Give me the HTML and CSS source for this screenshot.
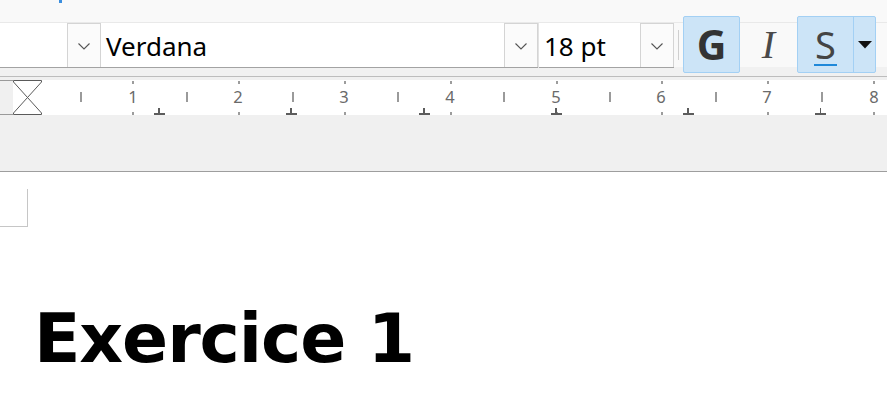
FILE: index.html
```html
<!DOCTYPE html>
<html lang="fr">
<head>
<meta charset="utf-8">
<title>Éditeur</title>
<link rel="stylesheet" href="styles.css">
</head>
<body>
<div class="topstrip"><span class="marker"></span></div>
<div class="toolbar">
  <div class="combo">
    <div class="field f1"></div>
    <div class="drop"><svg width="12" height="7" viewBox="0 0 12 7"><path d="M0.5 0.5 L6 6 L11.5 0.5" fill="none" stroke="#555" stroke-width="1.1"/></svg></div>
    <div class="field f2">Verdana</div>
    <div class="drop"><svg width="12" height="7" viewBox="0 0 12 7"><path d="M0.5 0.5 L6 6 L11.5 0.5" fill="none" stroke="#555" stroke-width="1.1"/></svg></div>
  </div>
  <div class="combo combo2">
    <div class="field f3">18 pt</div>
    <div class="drop"><svg width="12" height="7" viewBox="0 0 12 7"><path d="M0.5 0.5 L6 6 L11.5 0.5" fill="none" stroke="#555" stroke-width="1.1"/></svg></div>
  </div>
  <div class="sep"></div>
  <div class="btn active bold">G</div>
  <div class="btn italic">I</div>
  <div class="split">
    <div class="split-main"><span class="under">S</span></div>
    <div class="split-arrow"><svg width="14" height="8" viewBox="0 0 14 8"><path d="M0 0 H14 L7 7.5 Z" fill="#111"/></svg></div>
  </div>
</div>
<div class="rulerzone">
  <div class="ruler">
    <svg class="hourglass" width="42" height="35" viewBox="0 0 42 35">
      <path d="M0 0.5 H13 M0 34.5 H13" stroke="#9a9a9a" stroke-width="1"/>
      <path d="M13.5 0.5 H41.5 V2 L13.5 33 V34.5 H41.5 V33 L13.5 2 Z" fill="#fff" stroke="#5a5a5a" stroke-width="1"/>
    </svg>
    <span class="num" style="left:120px">1</span>
    <span class="num" style="left:225px">2</span>
    <span class="num" style="left:331px">3</span>
    <span class="num" style="left:437px">4</span>
    <span class="num" style="left:543px">5</span>
    <span class="num" style="left:648px">6</span>
    <span class="num" style="left:754px">7</span>
    <span class="num" style="left:861px">8</span>
    <span class="tick" style="left:119px"></span><span class="tick bot" style="left:119px"></span>
    <span class="tick" style="left:225px"></span><span class="tick bot" style="left:225px"></span>
    <span class="tick" style="left:331px"></span><span class="tick bot" style="left:331px"></span>
    <span class="tick" style="left:437px"></span><span class="tick bot" style="left:437px"></span>
    <span class="tick" style="left:543px"></span><span class="tick bot" style="left:543px"></span>
    <span class="tick" style="left:648px"></span><span class="tick bot" style="left:648px"></span>
    <span class="tick" style="left:754px"></span><span class="tick bot" style="left:754px"></span>
    <span class="tick" style="left:860px"></span><span class="tick bot" style="left:860px"></span>
    <span class="half" style="left:67px"></span>
    <span class="half" style="left:173px"></span>
    <span class="half" style="left:279px"></span>
    <span class="half" style="left:384px"></span>
    <span class="half" style="left:490px"></span>
    <span class="half" style="left:596px"></span>
    <span class="half" style="left:702px"></span>
    <span class="half" style="left:808px"></span>
    <span class="tab" style="left:141px"></span>
    <span class="tab" style="left:273px"></span>
    <span class="tab" style="left:406px"></span>
    <span class="tab" style="left:538px"></span>
    <span class="tab" style="left:670px"></span>
    <span class="tab" style="left:802px"></span>
  </div>
</div>
<div class="doc">
  <div class="corner"></div>
  <h1 class="title">Exercice 1</h1>
</div>
</body>
</html>
```

FILE: styles.css
```css
html, body {
  margin: 0;
  padding: 0;
}
body {
  width: 887px;
  height: 403px;
  overflow: hidden;
  background: #fff;
  font-family: "Noto Sans", "Open Sans", sans-serif;
}
.topstrip {
  height: 16px;
  background: #f9f9f9;
  display: flex;
}
.marker {
  display: block;
  margin-left: 59px;
  width: 3px;
  height: 3px;
  background: #3b8ede;
}
.toolbar {
  box-sizing: border-box;
  height: 61px;
  display: flex;
  align-items: flex-start;
  background: linear-gradient(#f9f9f9 0 6px, #e9e9e9 6px 7px, #f9f9f9 7px 51px, #f1f1f1 51px);
  border-bottom: 1px solid #bdbdbd;
}
.combo {
  display: flex;
  margin-top: 7px;
  height: 45px;
  box-sizing: border-box;
  border-bottom: 1px solid #a3a3a3;
  background: #fff;
}
.combo2 {
  margin-left: 1px;
  box-shadow: -1px 0 0 #e2e2e2;
}
.field {
  box-sizing: border-box;
  height: 44px;
  background: #fff;
  color: #000;
  font-size: 26px;
  line-height: 46px;
  padding-left: 5px;
  white-space: nowrap;
}
.f1 { width: 67px; }
.f2 { width: 403px; }
.f3 { width: 101px; }
.drop {
  box-sizing: border-box;
  width: 34px;
  height: 44px;
  border: 1px solid #d4d4d4;
  border-bottom: none;
  background: #fbfbfb;
  display: flex;
  align-items: center;
  justify-content: center;
}
.drop svg { margin-top: 1px; }
.sep {
  width: 1px;
  height: 30px;
  margin: 14px 4px 0 4px;
  background: #cfcfcf;
}
.btn {
  box-sizing: border-box;
  width: 57px;
  height: 57px;
  display: flex;
  align-items: center;
  justify-content: center;
  border: 1px solid transparent;
  border-radius: 2px;
  font-size: 40px;
  line-height: 1;
}
.active {
  background: #cce4f7;
  border-color: #a3d0f4;
}
.bold {
  font-family: "Noto Sans", sans-serif;
  font-weight: 700;
  font-size: 41px;
  color: #333;
}
.italic {
  font-family: "Liberation Serif", serif;
  font-style: italic;
  color: #4a4a4a;
  font-size: 40px;
}
.split {
  box-sizing: border-box;
  display: flex;
  height: 57px;
  background: #cce4f7;
  border: 1px solid #a3d0f4;
  border-radius: 2px;
}
.split-main {
  width: 55px;
  display: flex;
  align-items: center;
  justify-content: center;
  border-right: 1px solid #a3d0f4;
}
.under {
  font-size: 38px;
  color: #444;
  line-height: 1;
  border-bottom: 2px solid #1f88d9;
  padding: 0 1px 1px;
  margin-top: 2px;
}
.split-arrow {
  width: 21px;
  display: flex;
  align-items: center;
  justify-content: center;
}
.rulerzone {
  box-sizing: border-box;
  height: 95px;
  background: #f0f0f0;
  border-bottom: 1px solid #9e9e9e;
  padding-top: 3px;
}
.ruler {
  position: relative;
  margin-left: 13px;
  height: 35px;
  background: #fff;
}
.hourglass {
  position: absolute;
  left: -13px;
  top: 0;
}
.num {
  position: absolute;
  top: 6px;
  transform: translateX(-50%);
  font-size: 16.5px;
  line-height: 21px;
  color: #6a6a6a;
}
.tick {
  position: absolute;
  top: 1px;
  width: 2px;
  height: 3px;
  background: #9c9c9c;
}
.tick.bot {
  top: 32px;
}
.half {
  position: absolute;
  top: 12px;
  width: 2px;
  height: 10px;
  background: #9a9a9a;
}
.tab {
  position: absolute;
  top: 28px;
  width: 11px;
  height: 7px;
  background: linear-gradient(90deg, transparent 4.5px, #5c5c5c 4.5px 6.5px, transparent 6.5px) top / 11px 5px no-repeat,
              linear-gradient(#5c5c5c, #5c5c5c) bottom / 11px 2px no-repeat;
}
.doc {
  background: #fff;
}
.corner {
  width: 27px;
  height: 37px;
  margin-top: 17px;
  border-right: 1px solid #c6c6c6;
  border-bottom: 1px solid #c6c6c6;
}
.title {
  margin: 72px 0 0 34px;
  font-family: "DejaVu Sans", sans-serif;
  font-weight: 700;
  font-size: 68px;
  letter-spacing: -1.1px;
  line-height: 80px;
  color: #000;
  white-space: nowrap;
}
```
